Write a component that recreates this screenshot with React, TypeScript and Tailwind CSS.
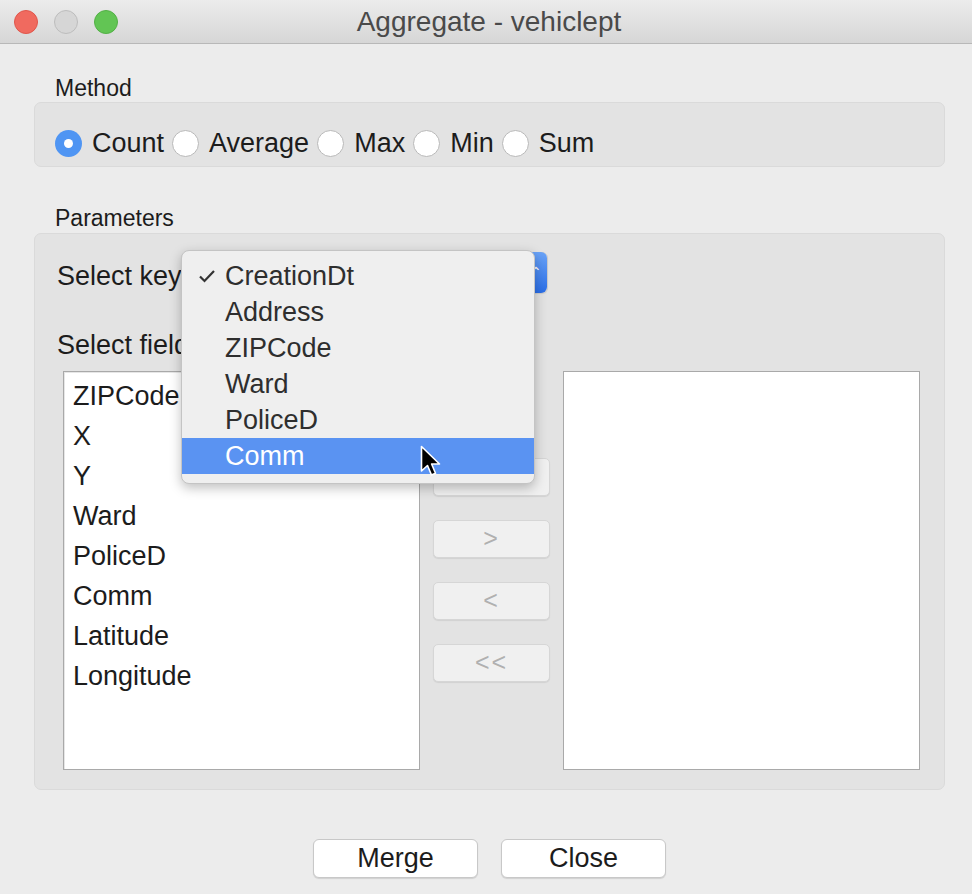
import React from "react";

const font = { fontFamily: '"Liberation Sans", Arial, sans-serif' };

const methods = ["Count", "Average", "Max", "Min", "Sum"];
const fields = ["ZIPCode", "X", "Y", "Ward", "PoliceD", "Comm", "Latitude", "Longitude"];
const menuItems = ["CreationDt", "Address", "ZIPCode", "Ward", "PoliceD", "Comm"];

function Radio({ checked }: { checked?: boolean }) {
    if (checked) {
        return (
            <span className="flex h-[27px] w-[27px] shrink-0 items-center justify-center rounded-full bg-[#4f95f3]">
                <span className="h-[9px] w-[9px] rounded-full bg-white" />
            </span>
        );
    }
    return <span className="h-[27px] w-[27px] shrink-0 rounded-full border border-[#b9b9b9] bg-white" />;
}

function ArrowButton({ label }: { label: string }) {
    return (
        <div className="flex h-[38px] w-[117px] items-center justify-center rounded-[5px] border border-[#d6d6d6] bg-[#f0f0f0] text-[25px] tracking-[2px] text-[#b0b0b0] shadow-[0_1px_1px_rgba(0,0,0,0.08)]">
            {label}
        </div>
    );
}

function Cursor() {
    return (
        <svg className="absolute left-[420px] top-[445px]" width="22" height="34" viewBox="0 0 22 34">
            <path
                d="M1.5 1.5 L1.5 26 L7.5 20.5 L11.5 30 L15.5 28.3 L11.6 19 L19.5 19 Z"
                fill="#000"
                stroke="#fff"
                strokeWidth="1.6"
                strokeLinejoin="round"
            />
        </svg>
    );
}

export default function App() {
    return (
        <div className="relative flex h-[894px] w-[972px] flex-col overflow-hidden bg-[#ececec] text-[#1c1c1c]" style={font}>
            {/* title bar */}
            <div className="relative flex h-[44px] shrink-0 items-center justify-center border-b border-[#b8b8b8] bg-gradient-to-b from-[#ececec] to-[#d6d6d6]">
                <div className="absolute left-[14px] top-[10px] flex gap-[16px]">
                    <span className="h-[24px] w-[24px] rounded-full border border-[#e0564b] bg-[#f06a5f]" />
                    <span className="h-[24px] w-[24px] rounded-full border border-[#bdbdbd] bg-[#d6d6d6]" />
                    <span className="h-[24px] w-[24px] rounded-full border border-[#53b046] bg-[#62c554]" />
                </div>
                <span className="pl-[6px] text-[28px] text-[#4a4a4a]">Aggregate - vehiclept</span>
            </div>

            <div className="flex flex-1 flex-col pl-[34px] pr-[27px]">
                {/* Method */}
                <div className="mt-[32px] h-[24px] pl-[21px] text-[23px] leading-[24px]">Method</div>
                <div className="mt-[2px] flex h-[65px] items-center rounded-[7px] border border-[#dadada] bg-[#e3e3e3] pl-[20px] pt-[17px]">
                    {methods.map((m, i) => (
                        <div key={m} className="flex items-center gap-[10px] pr-[8px]">
                            <Radio checked={i === 0} />
                            <span className="text-[27px] leading-[30px]">{m}</span>
                        </div>
                    ))}
                </div>

                {/* Parameters */}
                <div className="mt-[39px] h-[24px] pl-[21px] text-[23px] leading-[24px]">Parameters</div>
                <div className="mt-[3px] flex h-[557px] flex-col rounded-[7px] border border-[#dadada] bg-[#e3e3e3] pl-[22px] pr-[24px] pt-[18px]">
                    <div className="flex h-[41px] items-center">
                        <span className="mt-[8px] w-[124px] shrink-0 whitespace-nowrap text-[27px]">Select key</span>
                        <div className="flex h-[41px] w-[367px] items-center justify-end rounded-[6px] border border-[#c9c9c9] bg-white shadow-[0_1px_1px_rgba(0,0,0,0.1)]">
                            <div className="flex h-[41px] w-[22px] items-center justify-center rounded-r-[6px] bg-gradient-to-b from-[#6aa3f7] to-[#2a6ee8] text-[14px] text-white">
                                ⌃
                            </div>
                        </div>
                    </div>
                    <div className="mt-[40px] h-[24px] whitespace-nowrap text-[27px] leading-[24px]">Select fields</div>
                    <div className="ml-[6px] mt-[14px] flex h-[399px] gap-[13px]">
                        <div className="flex w-[357px] flex-col border border-[#a9a9a9] bg-white pl-[9px] pt-[4px] shadow-[inset_1px_1px_0_#e6e6e6]">
                            {fields.map((f) => (
                                <div key={f} className="h-[40px] text-[27px] leading-[40px]">
                                    {f}
                                </div>
                            ))}
                        </div>
                        <div className="flex w-[117px] flex-col gap-[24px] pt-[87px]">
                            <ArrowButton label=">>" />
                            <ArrowButton label=">" />
                            <ArrowButton label="<" />
                            <ArrowButton label="<<" />
                        </div>
                        <div className="w-[357px] border border-[#a9a9a9] bg-white" />
                    </div>
                </div>

                {/* bottom buttons */}
                <div className="mt-[49px] flex justify-center gap-[23px]">
                    <div className="flex h-[39px] w-[165px] items-center justify-center rounded-[6px] border border-[#c8c8c8] bg-white text-[27px] shadow-[0_1px_1px_rgba(0,0,0,0.12)]">
                        Merge
                    </div>
                    <div className="flex h-[39px] w-[165px] items-center justify-center rounded-[6px] border border-[#c8c8c8] bg-white text-[27px] shadow-[0_1px_1px_rgba(0,0,0,0.12)]">
                        Close
                    </div>
                </div>
            </div>

            {/* popup menu */}
            <div className="absolute left-[181px] top-[250px] w-[354px] rounded-[8px] border border-[#c4c4c4] bg-[#efefef] pb-[9px] pt-[7px] shadow-[0_4px_12px_rgba(0,0,0,0.25)]">
                {menuItems.map((m, i) => (
                    <div
                        key={m}
                        className={
                            i === 5
                                ? "relative h-[36px] bg-[#5a93f2] pl-[43px] text-[27px] leading-[36px] text-white"
                                : "relative h-[36px] pl-[43px] text-[27px] leading-[36px] text-[#2e2e2e]"
                        }
                    >
                        {i === 0 && (
                            <svg className="absolute left-[16px] top-[11px]" width="18" height="14" viewBox="0 0 18 14">
                                <path d="M2 7.5 L6.5 12 L16 2" fill="none" stroke="#333" strokeWidth="2.2" />
                            </svg>
                        )}
                        {m}
                    </div>
                ))}
            </div>

            <Cursor />
        </div>
    );
}
